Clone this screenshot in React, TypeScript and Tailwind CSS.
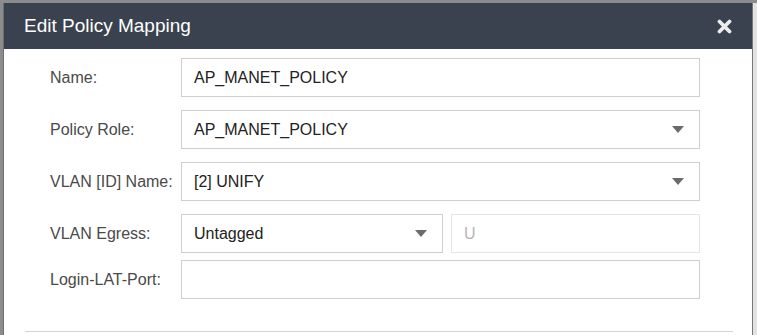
import React from 'react';

const Caret: React.FC = () => (
  <svg width="12" height="7" viewBox="0 0 12 7" className="shrink-0">
    <path d="M0 0 H12 L6 7 Z" fill="#6b6b6b" />
  </svg>
);

const Label: React.FC<{ children: React.ReactNode }> = ({ children }) => (
  <div className="w-[131px] shrink-0 text-[16px] text-[#4a4a4a]">{children}</div>
);

const TextBox: React.FC<{ value?: string }> = ({ value }) => (
  <div className="flex h-[39px] w-[519px] items-center border border-[#cfcfcf] bg-white px-[12px] text-[16px] text-[#222]">
    {value}
  </div>
);

const SelectBox: React.FC<{ value: string; width: string }> = ({ value, width }) => (
  <div
    className={`flex h-[39px] items-center justify-between border border-[#cfcfcf] bg-white pl-[12px] pr-[15px] text-[16px] text-[#222] ${width}`}
  >
    <span>{value}</span>
    <Caret />
  </div>
);

const App: React.FC = () => {
  return (
    <div
      className="flex h-[335px] w-[757px] overflow-hidden bg-[#8c8c8c] pt-[3px]"
      style={{ fontFamily: '"Liberation Sans", Arial, sans-serif' }}
    >
      <div className="ml-[3px] flex w-[749px] flex-col border-l border-[#6f6f6f] bg-white">
        <div className="flex h-[46px] shrink-0 items-center justify-between bg-[#39424e] pl-[20px] pr-[20px]">
          <span className="mt-[1px] text-[19px] text-white">Edit Policy Mapping</span>
          <svg width="15" height="15" viewBox="0 0 15 15">
            <path d="M2.5 2.5 L12.5 12.5 M12.5 2.5 L2.5 12.5" stroke="#ececec" strokeWidth="3.8" strokeLinecap="round" />
          </svg>
        </div>
        <div className="flex flex-col gap-[13px] pl-[46px] pt-[9px]">
          <div className="flex items-center">
            <Label>Name:</Label>
            <TextBox value="AP_MANET_POLICY" />
          </div>
          <div className="flex items-center">
            <Label>Policy Role:</Label>
            <SelectBox value="AP_MANET_POLICY" width="w-[519px]" />
          </div>
          <div className="flex items-center">
            <Label>VLAN [ID] Name:</Label>
            <SelectBox value="[2] UNIFY" width="w-[519px]" />
          </div>
          <div className="flex items-center">
            <Label>VLAN Egress:</Label>
            <SelectBox value="Untagged" width="w-[262px]" />
            <div className="ml-[8px] flex h-[39px] w-[249px] items-center border border-[#e6e6e6] px-[12px] text-[16px] text-[#b5b5b5]">
              U
            </div>
          </div>
          <div className="-mt-[6px] flex items-center">
            <Label>Login-LAT-Port:</Label>
            <TextBox />
          </div>
        </div>
        <div className="ml-[21px] mt-[32px] h-px w-[708px] bg-[#d4d4d4]" />
      </div>
      <div className="flex-1 border-l border-[#777] bg-[#e2e2e2]" />
    </div>
  );
};

export default App;
